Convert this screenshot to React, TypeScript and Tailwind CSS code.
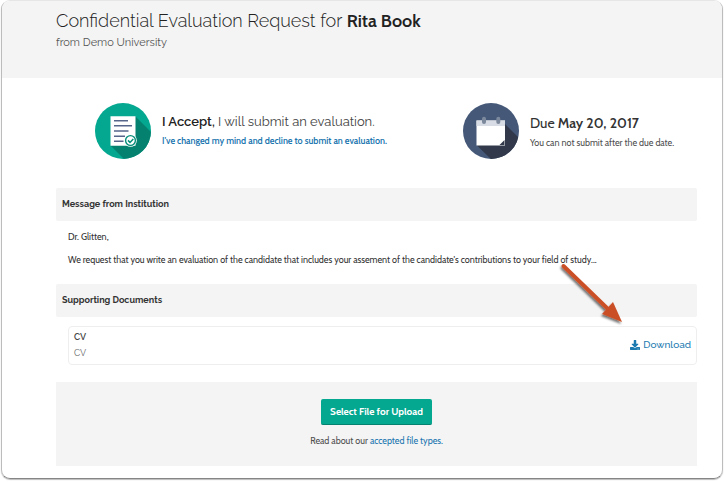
import type { ReactNode } from "react";
import { FaDownload } from "react-icons/fa";

function AcceptIcon() {
  return (
    <svg viewBox="0 0 56 56" className="size-14 shrink-0" aria-hidden="true">
      <defs>
        <clipPath id="accept-disc">
          <circle cx="28" cy="28" r="28" />
        </clipPath>
      </defs>
      <circle cx="28" cy="28" r="28" fill="#04a78f" />
      <path clipPath="url(#accept-disc)" d="M40.500 13.500 60 33V60H33L15.500 42.500Z" fill="#05816f" />
      <path d="M15.500 13.200h25v29.600h-25z" fill="#fff" />
      <path d="M19 17.700h14M19 22.800h18M19 28h14.500M19 33.200h11M19 38.300h9.500" stroke="#56658a" strokeWidth="1.500" />
      <circle cx="35.500" cy="37.500" r="6.300" fill="#fff" />
      <circle cx="35.500" cy="37.500" r="4.900" fill="#fff" stroke="#058e79" strokeWidth="1.400" />
      <path d="m33 37.400 2 2 3.300-3.400" fill="none" stroke="#058e79" strokeWidth="1.500" />
    </svg>
  );
}

function CalendarIcon() {
  return (
    <svg viewBox="0 0 56 56" className="size-14 shrink-0" aria-hidden="true">
      <defs>
        <clipPath id="calendar-disc">
          <circle cx="28" cy="28" r="28" />
        </clipPath>
      </defs>
      <circle cx="28" cy="28" r="28" fill="#455878" />
      <path clipPath="url(#calendar-disc)" d="M42 21 60 39V60H32L14 42.500Z" fill="#31394a" />
      <path d="M13.500 17.500H42V42.500H13.500z" fill="#fff" />
      <path d="M13.500 17.500H42V23H13.500z" fill="#d8dce4" />
      <path d="M36.500 42 41.500 37v5Z" fill="#31394a" />
      <rect x="19" y="13.700" width="4" height="7.300" rx="2" fill="#7c889c" />
      <rect x="33.300" y="13.700" width="4" height="7.300" rx="2" fill="#7c889c" />
    </svg>
  );
}

function SectionHeading({ children }: { children: ReactNode }) {
  return (
    <h2 className="rounded-xs bg-[#f4f4f4] px-1.5 font-['Raleway','Lato',sans-serif] text-[9px] leading-[33px] font-bold text-[#333]">
      {children}
    </h2>
  );
}

function PointerArrow() {
  return (
    <svg
      viewBox="0 0 70 70"
      className="pointer-events-none absolute right-[68px] bottom-[34px] size-[70px]"
      aria-hidden="true"
    >
      <defs>
        <filter id="arrow-shadow" x="-20%" y="-20%" width="140%" height="140%">
          <feDropShadow dx="-1" dy="2" stdDeviation="1.300" floodOpacity=".55" />
        </filter>
      </defs>
      <g filter="url(#arrow-shadow)" fill="#cb5028">
        <path d="M5.500 6 51 50" stroke="#cb5028" strokeWidth="4" strokeLinecap="round" />
        <path d="M64 62 55 42 44 54Z" />
      </g>
    </svg>
  );
}

export default function App() {
  return (
    <div className="bg-white px-px pb-0.5 font-['Cabin','Lato','Liberation_Sans',sans-serif] text-[#3c3c3c]">
      <div className="overflow-hidden rounded-[9px] border border-t-[#e6e6e6] border-r-[#bcbcbc] border-b-[#858585] border-l-[#bcbcbc] shadow-[0_1px_1px_#bbb]">
        <header className="bg-[#f4f4f4] px-[54px] pt-2 pb-[25px] font-['Raleway','Lato',sans-serif]">
          <h1 className="text-[18px] leading-6 font-light text-[#222]">
            Confidential Evaluation Request for{" "}
            <strong className="font-['Cabin','Lato',sans-serif] font-semibold">Rita Book</strong>
          </h1>
          <p className="text-[11px] leading-5 text-[#555]">from Demo University</p>
        </header>

        <main className="pr-[25px] pb-3 pl-[54px]">
          <section className="grid grid-cols-[368px_1fr] pt-[25px] pr-4 pb-[29px] pl-[39px]">
            <div className="flex items-center gap-[11px]">
              <AcceptIcon />
              <div className="whitespace-nowrap">
                <p className="font-['Raleway','Lato',sans-serif] text-[13px] leading-5 text-[#444]">
                  <strong className="font-semibold text-[#222]">I Accept,</strong> I will submit an evaluation.
                </p>
                <a href="#decline" className="block text-[9px] leading-[18px] font-semibold text-[#1b76b0]">
                  I&apos;ve changed my mind and decline to submit an evaluation.
                </a>
              </div>
            </div>
            <div className="flex items-center gap-[11px]">
              <CalendarIcon />
              <div className="pt-1 whitespace-nowrap">
                <p className="text-[14px] leading-5 text-[#333]">
                  Due <strong className="font-semibold">May 20, 2017</strong>
                </p>
                <p className="text-[9px] leading-5 text-[#505050]">You can not submit after the due date.</p>
              </div>
            </div>
          </section>

          <section>
            <SectionHeading>Message from Institution</SectionHeading>
            <div className="flex flex-col gap-[7px] px-3 pt-2 pb-4 text-[9px] leading-4 text-[#333]">
              <p>Dr. Glitten,</p>
              <p>
                We request that you write an evaluation of the candidate that includes your assement of the
                candidate&apos;s contributions to your field of study...
              </p>
            </div>
          </section>

          <section>
            <SectionHeading>Supporting Documents</SectionHeading>
            <div className="relative mt-[9px] ml-3 flex items-center justify-between rounded-sm border border-[#eee] px-[5px] pt-0.5 pb-[3px] font-['Raleway','Lato',sans-serif]">
              <div className="text-[9px] leading-4">
                <h3 className="font-semibold text-[#444]">CV</h3>
                <p className="text-[#666]">CV</p>
              </div>
              <a href="#download" className="flex items-center gap-[3px] text-[10px] leading-4 font-medium text-[#1b7ab0]">
                <FaDownload className="size-2.5" aria-hidden="true" />
                Download
              </a>
              <PointerArrow />
            </div>
          </section>

          <section className="mt-[17px] flex flex-col items-center gap-2 bg-[#f4f4f4] py-[17px]">
            <button
              type="button"
              className="rounded-xs border-b border-[#05816f] bg-[#04a78f] px-[9px] text-[10px] leading-[25px] font-bold text-white"
            >
              Select File for Upload
            </button>
            <p className="text-[9px] leading-4 text-[#505050]">
              Read about our{" "}
              <a href="#file-types" className="text-[#1b76b0]">
                accepted file types.
              </a>
            </p>
          </section>
        </main>
      </div>
    </div>
  );
}
